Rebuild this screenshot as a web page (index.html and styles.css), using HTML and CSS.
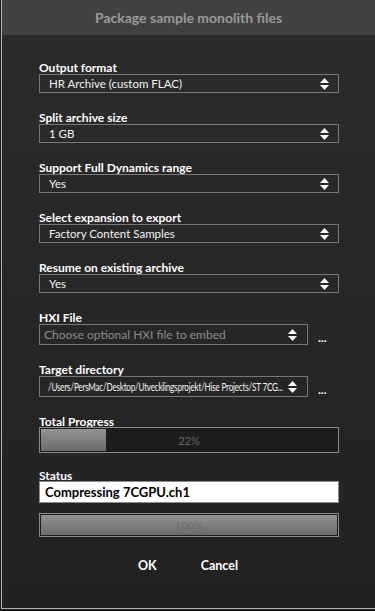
FILE: index.html
```html
<!DOCTYPE html>
<html lang="en">
<head>
    <meta charset="UTF-8">
    <meta name="viewport" content="width=device-width, initial-scale=1.0">
    <title>Package sample monolith files</title>
    <link rel="stylesheet" href="styles.css">
</head>
<body>
    <div class="dialog">
        <div class="dialog-header">Package sample monolith files</div>

        <div class="dialog-body">
            <div class="field">
                <div class="label">Output format</div>
                <div class="select">
                    <span class="value">HR Archive (custom FLAC)</span>
                    <svg class="arrows" width="9" height="12" viewBox="0 0 9 12"><polygon points="4.5,0 9,5 0,5"/><polygon points="0,7 9,7 4.5,12"/></svg>
                </div>
            </div>

            <div class="field">
                <div class="label">Split archive size</div>
                <div class="select">
                    <span class="value">1 GB</span>
                    <svg class="arrows" width="9" height="12" viewBox="0 0 9 12"><polygon points="4.5,0 9,5 0,5"/><polygon points="0,7 9,7 4.5,12"/></svg>
                </div>
            </div>

            <div class="field">
                <div class="label">Support Full Dynamics range</div>
                <div class="select">
                    <span class="value">Yes</span>
                    <svg class="arrows" width="9" height="12" viewBox="0 0 9 12"><polygon points="4.5,0 9,5 0,5"/><polygon points="0,7 9,7 4.5,12"/></svg>
                </div>
            </div>

            <div class="field">
                <div class="label">Select expansion to export</div>
                <div class="select">
                    <span class="value">Factory Content Samples</span>
                    <svg class="arrows" width="9" height="12" viewBox="0 0 9 12"><polygon points="4.5,0 9,5 0,5"/><polygon points="0,7 9,7 4.5,12"/></svg>
                </div>
            </div>

            <div class="field">
                <div class="label">Resume on existing archive</div>
                <div class="select">
                    <span class="value">Yes</span>
                    <svg class="arrows" width="9" height="12" viewBox="0 0 9 12"><polygon points="4.5,0 9,5 0,5"/><polygon points="0,7 9,7 4.5,12"/></svg>
                </div>
            </div>

            <div class="field">
                <div class="label">HXI File</div>
                <div class="file-row">
                    <div class="select tall">
                        <span class="value placeholder">Choose optional HXI file to embed</span>
                        <svg class="arrows" width="9" height="12" viewBox="0 0 9 12"><polygon points="4.5,0 9,5 0,5"/><polygon points="0,7 9,7 4.5,12"/></svg>
                    </div>
                    <span class="browse">...</span>
                </div>
            </div>

            <div class="field">
                <div class="label">Target directory</div>
                <div class="file-row">
                    <div class="select tall">
                        <span class="value path">/Users/PersMac/Desktop/Utvecklingsprojekt/Hise Projects/ST 7CG...</span>
                        <svg class="arrows" width="9" height="12" viewBox="0 0 9 12"><polygon points="4.5,0 9,5 0,5"/><polygon points="0,7 9,7 4.5,12"/></svg>
                    </div>
                    <span class="browse">...</span>
                </div>
            </div>

            <div class="field progress-field">
                <div class="label short">Total Progress</div>
                <div class="progress">
                    <div class="progress-fill" style="width: 22%"></div>
                    <span class="progress-text">22%</span>
                </div>
            </div>

            <div class="field status-field">
                <div class="label short">Status</div>
                <div class="status">Compressing 7CGPU.ch1</div>
                <div class="progress small">
                    <div class="progress-fill" style="width: 100%"></div>
                    <span class="progress-text">100%</span>
                </div>
            </div>

            <div class="buttons">
                <button>OK</button>
                <button>Cancel</button>
            </div>
        </div>
    </div>
</body>
</html>
```

FILE: styles.css
```css
html, body {
    margin: 0;
    padding: 0;
    background-color: #1c1c1c;
}
body {
    font-family: Lato, 'Open Sans', sans-serif;
    color: #eeeeee;
    padding-left: 1px;
}
.dialog {
    height: 608px;
    border-left: 1px solid #b4b4b4;
    border-bottom: 1px solid #b4b4b4;
    background: linear-gradient(#2c2c2c, #222222);
}
.dialog-header {
    height: 35px;
    line-height: 36px;
    background-color: #414141;
    color: #9a9a9a;
    font-size: 14px;
    font-weight: bold;
    text-align: center;
}
.dialog-body {
    padding: 26px 36px 0 37px;
}
.field {
    margin-bottom: 18px;
}
.label {
    height: 13px;
    line-height: 13px;
    font-size: 12px;
    font-weight: bold;
    color: #ffffff;
}
.label.short {
    height: 12px;
}
.select {
    height: 17px;
    border: 1px solid #777777;
    display: flex;
    align-items: center;
    justify-content: space-between;
    padding: 0 9px 0 9px;
}
.select.tall {
    height: 19px;
    flex: 1;
    min-width: 0;
    padding-left: 4px;
    padding-right: 10px;
}
.value {
    font-size: 11.5px;
    color: #f2f2f2;
    white-space: nowrap;
}
.value.placeholder {
    color: #8c8c8c;
    font-size: 12px;
}
.value.path {
    flex: 1;
    min-width: 0;
    font-size: 11px;
    letter-spacing: -0.3px;
    margin-left: 4px;
    transform: scaleX(0.74);
    transform-origin: left center;
}
.arrows {
    fill: #ffffff;
    flex-shrink: 0;
}
.file-row {
    display: flex;
    align-items: center;
}
.browse {
    width: 31px;
    flex-shrink: 0;
    box-sizing: border-box;
    padding-left: 10px;
    font-size: 12px;
    font-weight: bold;
    color: #ffffff;
    padding-top: 5px;
}
.progress-field {
    margin-top: 1px;
    margin-bottom: 16px;
}
.progress {
    position: relative;
    height: 22px;
    border: 1px solid #8a8a8a;
    background-color: #1d1d1d;
    padding: 1px;
}
.progress.small {
    height: 20px;
    margin-top: 10px;
}
.progress-fill {
    height: 100%;
    background: linear-gradient(#939393, #6b6b6b);
}
.progress-text {
    position: absolute;
    left: 0;
    right: 0;
    top: 0;
    bottom: 0;
    display: flex;
    align-items: center;
    justify-content: center;
    font-size: 11px;
    color: #6a6a6a;
}
.status {
    height: 20px;
    line-height: 21px;
    background-color: #ffffff;
    border: 1px solid #8a8a8a;
    color: #000000;
    font-size: 13px;
    font-weight: bold;
    padding-left: 5px;
}
.buttons {
    display: flex;
    justify-content: center;
    gap: 44px;
    padding-right: 2px;
    margin-top: 21px;
}
button {
    background: none;
    border: none;
    color: #ffffff;
    font-family: Lato, 'Open Sans', sans-serif;
    font-size: 12.5px;
    font-weight: bold;
    padding: 0;
}
```
